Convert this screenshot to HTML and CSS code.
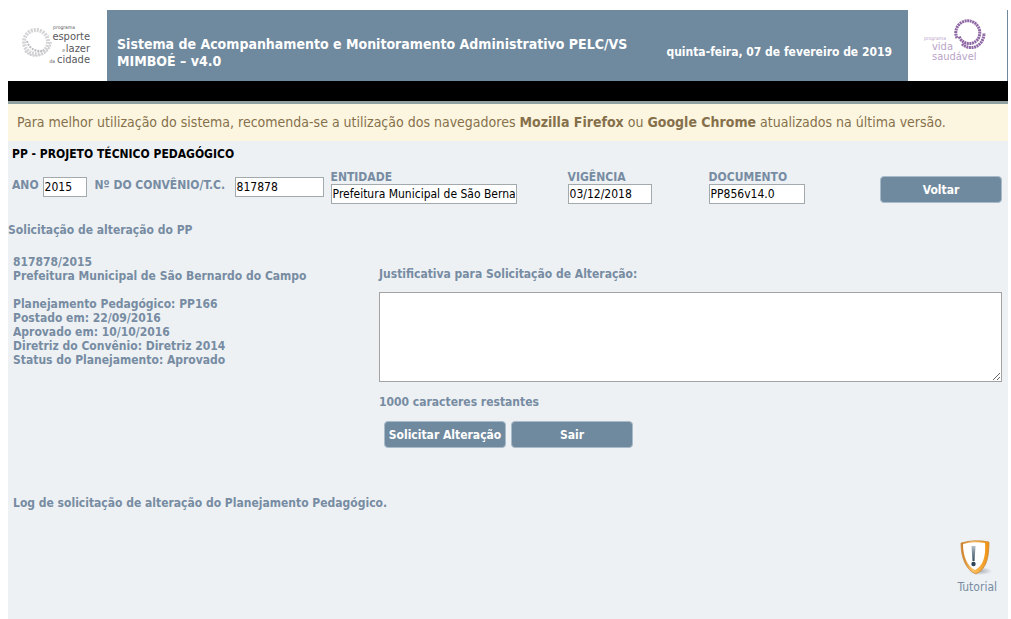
FILE: index.html
```html
<!DOCTYPE html>
<html lang="pt-BR">
<head>
<meta charset="utf-8">
<title>PP - Projeto Técnico Pedagógico</title>
<link rel="stylesheet" href="styles.css">
</head>
<body>
<div class="page">
  <header class="header">
    <div class="logo">
      <svg viewBox="0 0 99 71" width="99" height="71" role="img" aria-label="Programa Esporte e Lazer da Cidade">
        <g fill="none" stroke-dasharray="2 1">
          <circle cx="28" cy="32" r="12" stroke="#d4d4d7" stroke-width="4"/>
          <path d="M19 31c2 8 10 12 17 9" stroke="#bcbcc0" stroke-width="2"/>
          <path d="M17 41c8 9 24 5 26-9" stroke="#cfcfd3" stroke-width="2"/>
        </g>
        <g class="logo-city" text-anchor="end">
          <text class="logo-tiny" x="67" y="19">programa</text>
          <text x="82" y="30">esporte</text>
          <text x="82" y="42">lazer</text>
          <text x="82" y="53">cidade</text>
          <text class="logo-tiny" x="57" y="42">e</text>
          <text class="logo-tiny" x="47" y="53">da</text>
        </g>
      </svg>
    </div>
    <h1 class="title">Sistema de Acompanhamento e Monitoramento Administrativo PELC/VS MIMBOÉ – v4.0</h1>
    <p class="date">quinta-feira, 07 de fevereiro de 2019</p>
    <div class="logo">
      <svg viewBox="0 0 99 71" width="99" height="71" role="img" aria-label="Programa Vida Saudável">
        <g fill="none" stroke="#8d66a3" stroke-dasharray="2 .6">
          <path d="M49 28a12 12 0 1 1 21 1c-5 7-16 6-19-3" stroke-width="3"/>
          <path d="M54 34c9 8 22 2 22-11" stroke-width="3"/>
        </g>
        <g class="logo-life">
          <text class="logo-tiny" x="16" y="30">programa</text>
          <text x="24" y="40">vida</text>
          <text x="24" y="50">saudável</text>
        </g>
      </svg>
    </div>
  </header>
  <div class="menu-bar"></div>
  <p class="notice">Para melhor utilização do sistema, recomenda-se a utilização dos navegadores <b>Mozilla Firefox</b> ou <b>Google Chrome</b> atualizados na última versão.</p>
  <main class="content">
    <h2 class="section">PP - PROJETO TÉCNICO PEDAGÓGICO</h2>
    <form class="fields">
      <div class="inline-field">
        <label for="ano">ANO</label>
        <input class="box year" id="ano" type="text" value="2015">
      </div>
      <div class="inline-field">
        <label class="wide-label" for="convenio">Nº DO CONVÊNIO/T.C.</label>
        <input class="box agreement" id="convenio" type="text" value="817878">
      </div>
      <div class="field field-entity">
        <label for="entidade">ENTIDADE</label>
        <input class="box entity" id="entidade" type="text" value="Prefeitura Municipal de São Bernardo do Campo">
      </div>
      <div class="field field-term">
        <label for="vigencia">VIGÊNCIA</label>
        <input class="box term" id="vigencia" type="text" value="03/12/2018">
      </div>
      <div class="field">
        <label for="documento">DOCUMENTO</label>
        <input class="box document" id="documento" type="text" value="PP856v14.0">
      </div>
      <button class="button back" type="button">Voltar</button>
    </form>
    <h3 class="subtitle">Solicitação de alteração do PP</h3>
    <div class="columns">
      <div class="summary">
        <p>817878/2015<br>Prefeitura Municipal de São Bernardo do Campo</p>
        <p>Planejamento Pedagógico: PP166<br>Postado em: 22/09/2016<br>Aprovado em: 10/10/2016<br>Diretriz do Convênio: Diretriz 2014<br>Status do Planejamento: Aprovado</p>
      </div>
      <form class="request">
        <label for="justificativa">Justificativa para Solicitação de Alteração:</label>
        <textarea class="reason" id="justificativa"></textarea>
        <p class="remaining">1000 caracteres restantes</p>
        <div class="actions">
          <button class="button" type="button">Solicitar Alteração</button>
          <button class="button" type="button">Sair</button>
        </div>
      </form>
    </div>
    <p class="log">Log de solicitação de alteração do Planejamento Pedagógico.</p>
    <a class="tutorial" href="#tutorial">
      <svg viewBox="0 0 36 38" width="36" height="38" aria-hidden="true">
        <defs>
          <linearGradient id="rim" x1="0" x2="1"><stop offset="0" stop-color="#c87820"/><stop offset=".4" stop-color="#ffc366"/><stop offset="1" stop-color="#ee900f"/></linearGradient>
          <linearGradient id="mark" x1="0" x2="0" y1="0" y2="1"><stop offset="0" stop-color="#b4bec8"/><stop offset="1" stop-color="#344b5e"/></linearGradient>
          <radialGradient id="shade"><stop offset="0" stop-color="#a9aeb4"/><stop offset="1" stop-color="#edf1f4"/></radialGradient>
        </defs>
        <ellipse cx="21" cy="33" rx="12" ry="4" fill="url(#shade)"/>
        <path d="M2 5Q16 1 30 4C30 18 28 31 17 36 7 32 2 20 2 5z" fill="url(#rim)" stroke="#c98a40" stroke-width=".8"/>
        <path d="M4 6Q14 3 26 5C27 18 24 28 16 32 8 28 4 18 4 6z" fill="#fff"/>
        <path d="M12.500 8h4l-1 15h-2z" fill="url(#mark)"/>
        <circle cx="14.500" cy="26" r="2.200" fill="#2e4558"/>
      </svg>
      <span>Tutorial</span>
    </a>
  </main>
</div>
</body>
</html>
```
FILE: styles.css
```css
* { box-sizing: border-box; }
html { height: 100%; background: #fff; }
body {
  min-height: 100%;
  margin: 0;
  padding: 8px 3px 0 8px;
  border-top: 2px solid #a9b7b7;
  border-image: linear-gradient(#fff 50%, #a9b7b7 50%) 2;
  display: flex;
  font-family: Tahoma, "DejaVu Sans Condensed", "Noto Sans", sans-serif;
  font-size: 12px;
  line-height: 14px;
  color: #778ca2;
}
h1, h2, h3, p { margin: 0; }
.page { flex: 1; display: flex; flex-direction: column; }
.header {
  display: flex;
  align-items: center;
  padding-right: 1px;
  background: #6f899e;
  color: #fff;
}
.logo { flex: none; background: #fff; }
.logo svg { display: block; }
.logo-city, .logo-life { font-family: "DejaVu Sans Condensed", sans-serif; font-size: 11px; }
.logo-city { fill: #58585c; }
.logo-life { fill: #b9a3c8; }
.logo .logo-tiny { font-size: 5px; }
.title {
  flex: 1;
  padding: 14px 10px 0;
  font-size: 14px;
  line-height: 17px;
}
.date { padding: 12px 16px 0 0; font-weight: bold; line-height: 16px; }
.menu-bar { height: 23px; background: #000; border-bottom: 3px solid #8fa1a1; }
.notice {
  padding: 10px 9px;
  background: #fcf6e0;
  color: #86704b;
  font-size: 14px;
  line-height: 17px;
}
.content {
  flex: 1;
  display: flex;
  flex-direction: column;
  padding: 6px 6px 20px 0;
  background: #edf1f4;
}
.section { padding-left: 4px; font-size: 12px; line-height: 14px; color: #000; }
.fields {
  display: flex;
  padding: 10px 0 0 4px;
  font-weight: bold;
}
.inline-field { display: flex; align-items: flex-start; gap: 4px; margin-right: 7px; padding-top: 6px; }
.inline-field label { padding-top: 1px; }
.wide-label { width: 137px; padding-left: 1px; }
.field { display: flex; flex-direction: column; }
.field label { line-height: 13px; }
.field-entity { margin-right: 51px; }
.field-term { margin-right: 57px; }
.box {
  height: 20px;
  padding: 1px;
  border: 1px solid #a3aaae;
  background: #fff;
  color: #000;
  font: 12px/14px Tahoma, "DejaVu Sans Condensed", "Noto Sans", sans-serif;
}
.year { width: 44px; }
.agreement { width: 89px; }
.entity { width: 186px; }
.term { width: 84px; }
.document { width: 96px; }
.button {
  width: 122px;
  height: 27px;
  padding: 0;
  border: 1px solid #a9bac8;
  border-radius: 4px;
  background: #6f899e;
  color: #fff;
  font: inherit;
  font-weight: bold;
}
.back { margin: 5px 0 0 auto; }
.subtitle { margin-top: 19px; font-size: 12px; line-height: 14px; }
.columns { display: flex; margin-top: 18px; font-weight: bold; }
.summary { flex: none; width: 370px; padding-left: 5px; }
.summary p { margin-bottom: 14px; }
.request { flex: 1; padding: 12px 0 0 1px; }
.request label { display: block; }
.reason {
  display: block;
  width: 100%;
  height: 90px;
  margin: 11px 0 13px;
  border: 1px solid #a3a3a3;
  background: #fff;
  font: inherit;
}
.actions { display: flex; gap: 5px; padding: 12px 0 0 5px; }
.log { margin-top: 48px; padding-left: 5px; font-weight: bold; }
.tutorial {
  display: flex;
  flex-direction: column;
  align-items: center;
  align-self: flex-end;
  gap: 4px;
  margin-top: 28px;
  padding-right: 5px;
  color: #778ca2;
  text-decoration: none;
}
```
